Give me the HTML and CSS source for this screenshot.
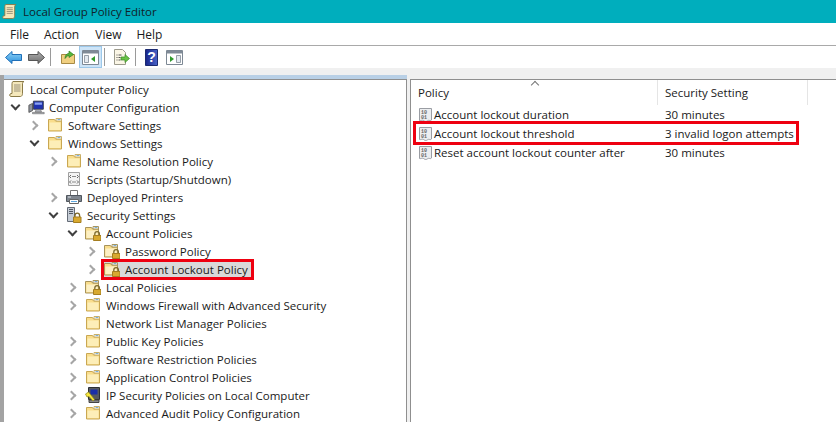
FILE: index.html
```html
<!DOCTYPE html>
<html lang="en">
<head>
<meta charset="utf-8">
<title>Local Group Policy Editor</title>
<link rel="stylesheet" href="styles.css">
</head>
<body>
<svg class="sprite" aria-hidden="true">
  <defs>
    <linearGradient id="blueArrow" x1="0" y1="0" x2="0" y2="1">
      <stop offset="0" stop-color="#8fd3f7"/><stop offset="1" stop-color="#2b8fdc"/>
    </linearGradient>
    <linearGradient id="greyArrow" x1="0" y1="0" x2="0" y2="1">
      <stop offset="0" stop-color="#b0b0b0"/><stop offset="1" stop-color="#6d6d6d"/>
    </linearGradient>
    <linearGradient id="helpBook" x1="0" y1="0" x2="1" y2="0">
      <stop offset="0" stop-color="#17248a"/><stop offset="1" stop-color="#4a64c8"/>
    </linearGradient>
    <symbol id="scroll" viewBox="0 0 16 16">
      <path d="M4 .5h11c-1 .5-1.500 1.200-1.500 2.200v10c0 1.300-.8 2.800-2 2.800H1.800C.3 15.300.3 12.800 2 12.500h1V2.500C3 1.500 3.300.8 4 .5z" fill="#f5e8bb" stroke="#8a7a48"/>
      <path d="M5 4h6.500M5 6h6.500M5 8h6.500M5 10h6.500" stroke="#9a917a"/>
    </symbol>
    <symbol id="folder" viewBox="0 0 16 16">
      <path d="M1.500 2.500h6l1 1.500h6v10h-13z" fill="#f9dd8c" stroke="#c9a752"/>
      <path d="M2.500 5.500h11v7.500h-11z" fill="#fdeeb8"/>
      <path d="M9 1.500h5.500v2.500H9z" fill="#fff" stroke="#c9b06a"/>
      <path d="M10.500 2.500h3" stroke="#7fb0d8"/>
    </symbol>
    <symbol id="lockfolder" viewBox="0 0 16 16">
      <path d="M.5 2.500h6l1 1.500h6v10H.5z" fill="#f9dd8c" stroke="#a8935a"/>
      <path d="M1.500 5.500h11v7.500h-11z" fill="#fdf0c4"/>
      <path d="M8 1.500h5.500v2.500H8z" fill="#fff" stroke="#a8965f"/>
      <path d="M9.500 2.500h3" stroke="#7fb0d8"/>
      <path d="M9.800 10.500V9a2.300 2.300 0 0 1 4.600 0v1.500" fill="none" stroke="#7d6a2c" stroke-width="1.300"/>
      <path d="M8.500 10.500h7.500v5H8.500z" fill="#d8a92f" stroke="#a57e20"/>
    </symbol>
    <symbol id="computer" viewBox="0 0 20 16">
      <path d="M1 6l4-2v8l-4 2z" fill="#8e939e" stroke="#555"/>
      <path d="M6 1.500h11v9H6z" fill="#1f32b0" stroke="#333a48"/>
      <path d="M7.500 3h8v2.500h-8z" fill="#8aa2f2"/>
      <path d="M9 11h5l1 2.500H8zM5 14h13v1.500H5z" fill="#b8bcc4" stroke="#666" stroke-width=".7"/>
    </symbol>
    <symbol id="script" viewBox="0 0 16 16">
      <path d="M2.500 1.500h11v13h-11z" fill="#f3f3f3" stroke="#a0a0a0"/>
      <path d="M5 4l-1.500 1.500L5 7M11 4l1.500 1.500L11 7M5 9.500L3.500 11 5 12.500M11 9.500l1.500 1.500-1.500 1.500" fill="none" stroke="#666"/>
      <path d="M6 5.500h4M6 11h4" stroke="#888"/>
    </symbol>
    <symbol id="printer" viewBox="0 0 16 16">
      <path d="M4.500 1.500h7v5h-7z" fill="#fff" stroke="#777"/>
      <path d="M.5 6.500h15v6H.5z" fill="#7f868f" stroke="#50565e"/>
      <path d="M3.500 10.500h9v4h-9z" fill="#fff" stroke="#666"/>
      <path d="M2 8h3" stroke="#dfe3e8"/>
      <path d="M5 12.500h6" stroke="#5ea8e0"/>
    </symbol>
    <symbol id="server" viewBox="0 0 16 16">
      <path d="M1.500.5h7v14h-7z" fill="#c6cdd6" stroke="#646b76"/>
      <path d="M3 2.500h4M3 4.500h4M3 6.500h4" stroke="#505864"/>
      <path d="M9 10V8.500a2.300 2.300 0 0 1 4.600 0V10" fill="none" stroke="#7d6a2c" stroke-width="1.300"/>
      <path d="M7.500 10h7.500v5.500H7.500z" fill="#d8a92f" stroke="#a57e20"/>
    </symbol>
    <symbol id="ipsec" viewBox="0 0 16 16">
      <path d="M3.500.5h11v12h-11z" fill="#55595f" stroke="#2c2f33"/>
      <path d="M5.500 2.500h7v5h-7z" fill="#1a2fa8"/>
      <path d="M4 13h10v2.500H4z" fill="#888" stroke="#444"/>
      <path d="M.5 7l3-2 2 2.500 4 5-1.500 1.500-4-4.500-2 .5z" fill="#f6e63c" stroke="#8c8420" stroke-width=".7"/>
    </symbol>
    <symbol id="policy" viewBox="0 0 16 16">
      <path d="M1.500 1.500h12v11.500c-1 1.500-2.500-.5-4 .8s-3 .5-4-.3-3 .5-4 0z" fill="#eceef0" stroke="#9a9da3"/>
      <text x="3" y="6.500" class="bits">10</text>
      <text x="3" y="11.500" class="bits">01</text>
    </symbol>
    <symbol id="back" viewBox="0 0 17 13">
      <path d="M.5 6.500L7 .5v3h9.500v6H7v3z" fill="url(#blueArrow)" stroke="#1f6fb8"/>
    </symbol>
    <symbol id="forward" viewBox="0 0 17 13">
      <path d="M16.500 6.500L10 .5v3H.5v6H10v3z" fill="url(#greyArrow)" stroke="#555"/>
    </symbol>
    <symbol id="up" viewBox="0 0 16 16">
      <path d="M1.500 5.500h13v9h-13z" fill="#f0cf80" stroke="#a88a44"/>
      <path d="M5 9.500C5 6 7 4.500 9 4.500V2l4.500 3.500L9 8.500V6.500C7.500 6.500 6.500 7.500 5 9.500z" fill="#55b83a" stroke="#2e7d22" stroke-width=".7"/>
    </symbol>
    <symbol id="panel-left" viewBox="0 0 17 15">
      <path d="M.5.5h16v14H.5z" fill="#fff" stroke="#7d8894"/>
      <path d="M1 1h15v2.500H1z" fill="#7f8a96"/>
      <path d="M2.500 5.500h4v7h-4z" fill="#e4e9ef" stroke="#7f8a96" stroke-width=".8"/>
      <path d="M13 6v6L9 9z" fill="#2f9a2c"/>
    </symbol>
    <symbol id="panel-right" viewBox="0 0 17 15">
      <path d="M.5.5h16v14H.5z" fill="#fff" stroke="#7d8894"/>
      <path d="M1 1h15v2.500H1z" fill="#7f8a96"/>
      <path d="M10.500 5.500h4v7h-4z" fill="#e4e9ef" stroke="#7f8a96" stroke-width=".8"/>
      <path d="M4 6v6l4-3z" fill="#2f9a2c"/>
    </symbol>
    <symbol id="export" viewBox="0 0 17 16">
      <path d="M1.500.5h8l3 3v12h-11z" fill="#fbf6e6" stroke="#9c9a8c"/>
      <path d="M3.500 6h1M3.500 8.500h1M3.500 11h1M5.500 6h3M5.500 8.500h2M5.500 11h2" stroke="#555"/>
      <path d="M8 8h4V5.500L16.500 9.500 12 13.500V11H8z" fill="#69c245" stroke="#3a8a26" stroke-width=".7"/>
    </symbol>
    <symbol id="help" viewBox="0 0 13 17">
      <path d="M.5.500h12v16H.5z" fill="url(#helpBook)" stroke="#1c2a70"/>
      <text x="6.500" y="13" class="qmark">?</text>
    </symbol>
  </defs>
</svg>

<header class="titlebar">
  <svg class="ico-title"><use href="#scroll"/></svg>
  <span class="title">Local Group Policy Editor</span>
</header>

<nav class="menubar">
  <span class="menu m-file">File</span>
  <span class="menu m-action">Action</span>
  <span class="menu m-view">View</span>
  <span class="menu">Help</span>
</nav>

<div class="toolbar">
  <span class="btn"><svg class="ico-arrow"><use href="#back"/></svg></span>
  <span class="btn"><svg class="ico-arrow"><use href="#forward"/></svg></span>
  <span class="sep"></span>
  <span class="btn"><svg class="ico-16"><use href="#up"/></svg></span>
  <span class="btn pressed"><svg class="ico-panel"><use href="#panel-left"/></svg></span>
  <span class="sep"></span>
  <span class="btn"><svg class="ico-export"><use href="#export"/></svg></span>
  <span class="sep sep-tight"></span>
  <span class="btn"><svg class="ico-help"><use href="#help"/></svg></span>
  <span class="btn"><svg class="ico-panel"><use href="#panel-right"/></svg></span>
</div>

<main class="workspace">
  <section class="tree">
    <div class="row l0"><svg class="ico"><use href="#scroll"/></svg><span class="label">Local Computer Policy</span></div>
    <div class="row l1"><span class="chev open"></span><svg class="ico ico-wide"><use href="#computer"/></svg><span class="label">Computer Configuration</span></div>
    <div class="row l2"><span class="chev"></span><svg class="ico"><use href="#folder"/></svg><span class="label">Software Settings</span></div>
    <div class="row l2"><span class="chev open"></span><svg class="ico"><use href="#folder"/></svg><span class="label">Windows Settings</span></div>
    <div class="row l3"><span class="chev"></span><svg class="ico"><use href="#folder"/></svg><span class="label">Name Resolution Policy</span></div>
    <div class="row l3"><span class="chev none"></span><svg class="ico"><use href="#script"/></svg><span class="label">Scripts (Startup/Shutdown)</span></div>
    <div class="row l3"><span class="chev"></span><svg class="ico"><use href="#printer"/></svg><span class="label">Deployed Printers</span></div>
    <div class="row l3"><span class="chev open"></span><svg class="ico"><use href="#server"/></svg><span class="label">Security Settings</span></div>
    <div class="row l4"><span class="chev open"></span><svg class="ico"><use href="#lockfolder"/></svg><span class="label">Account Policies</span></div>
    <div class="row l5"><span class="chev"></span><svg class="ico"><use href="#lockfolder"/></svg><span class="label">Password Policy</span></div>
    <div class="row l5"><span class="chev"></span><span class="picked"><svg class="ico"><use href="#lockfolder"/></svg><span class="label">Account Lockout Policy</span></span></div>
    <div class="row l4"><span class="chev"></span><svg class="ico"><use href="#lockfolder"/></svg><span class="label">Local Policies</span></div>
    <div class="row l4"><span class="chev"></span><svg class="ico"><use href="#folder"/></svg><span class="label">Windows Firewall with Advanced Security</span></div>
    <div class="row l4"><span class="chev none"></span><svg class="ico"><use href="#folder"/></svg><span class="label">Network List Manager Policies</span></div>
    <div class="row l4"><span class="chev"></span><svg class="ico"><use href="#folder"/></svg><span class="label">Public Key Policies</span></div>
    <div class="row l4"><span class="chev"></span><svg class="ico"><use href="#folder"/></svg><span class="label">Software Restriction Policies</span></div>
    <div class="row l4"><span class="chev"></span><svg class="ico"><use href="#folder"/></svg><span class="label">Application Control Policies</span></div>
    <div class="row l4"><span class="chev"></span><svg class="ico"><use href="#ipsec"/></svg><span class="label">IP Security Policies on Local Computer</span></div>
    <div class="row l4"><span class="chev"></span><svg class="ico"><use href="#folder"/></svg><span class="label">Advanced Audit Policy Configuration</span></div>
  </section>

  <section class="list">
    <div class="list-head">
      <span class="col-a head-cell">Policy<span class="sort"></span></span>
      <span class="col-b head-cell">Security Setting</span>
    </div>
    <div class="list-row">
      <span class="col-a cell"><svg class="ico"><use href="#policy"/></svg>Account lockout duration</span>
      <span class="col-b">30 minutes</span>
    </div>
    <div class="list-row marked">
      <span class="col-a cell"><svg class="ico"><use href="#policy"/></svg>Account lockout threshold</span>
      <span class="col-b">3 invalid logon attempts</span>
    </div>
    <div class="list-row">
      <span class="col-a cell"><svg class="ico"><use href="#policy"/></svg>Reset account lockout counter after</span>
      <span class="col-b">30 minutes</span>
    </div>
  </section>
</main>
</body>
</html>
```

FILE: styles.css
```css
*, *::before, *::after { box-sizing: border-box; }

html, body {
  margin: 0;
  height: 100%;
  overflow: hidden;
}

body {
  background: #f0f0f0;
  color: #1a1a1a;
  font-family: "Open Sans", "Noto Sans", sans-serif;
  font-size: 11.500px;
  display: flex;
  flex-direction: column;
}

.sprite { width: 0; height: 0; position: absolute; }
.bits { font: bold 5px "Liberation Mono", monospace; fill: #666; }
.qmark { font: bold 14px "Liberation Sans", sans-serif; fill: #fff; text-anchor: middle; }

.titlebar {
  height: 23px;
  background: #00aebd;
  display: flex;
  align-items: center;
  padding-left: 2px;
  flex: none;
}
.ico-title { width: 15px; height: 15px; margin-right: 6px; }
.title { color: #10222a; }

.menubar {
  height: 23px;
  background: #fff;
  border-bottom: 1px solid #a9a9a9;
  display: flex;
  align-items: center;
  padding-left: 10px;
  font-size: 12px;
  flex: none;
}
.menu { display: block; }
.m-file { margin-right: 15px; }
.m-action { margin-right: 16px; }
.m-view { margin-right: 15px; }

.toolbar {
  height: 22px;
  background: #fff;
  display: flex;
  align-items: stretch;
  padding-left: 2px;
  flex: none;
}
.btn {
  width: 23px;
  display: flex;
  align-items: center;
  justify-content: center;
  flex: none;
}
.pressed { background: #cde4f7; border: 1px solid #9cc8ea; }
.sep {
  width: 1px;
  margin: 2px 5px 2px 2px;
  background: #9a9a9a;
  flex: none;
}
.sep-tight { margin-right: 4px; }
.ico-arrow { width: 17px; height: 13px; }
.ico-16 { width: 16px; height: 16px; }
.ico-panel { width: 17px; height: 15px; }
.ico-export { width: 17px; height: 16px; }
.ico-help { width: 13px; height: 17px; }

.workspace {
  flex: 1;
  min-height: 0;
  display: flex;
  padding: 11px 0 0 4px;
  background: linear-gradient(#a3a3a3, #a3a3a3) 0 7px / 4px 100% no-repeat #f0f0f0;
}

.tree {
  width: 403px;
  background: #fff;
  border-top: 1px solid #8f8f8f;
  border-right: 1px solid #8f8f8f;
  box-shadow: 0 -4px 0 #b9d0e6;
  overflow: hidden;
  flex: none;
}

.row {
  height: 18px;
  display: flex;
  align-items: center;
  white-space: nowrap;
}
.l0, .l1 { padding-left: 5px; }
.l2 { padding-left: 24px; }
.l3 { padding-left: 43px; }
.l4 { padding-left: 62px; }
.l5 { padding-left: 81px; }

.chev {
  width: 19px;
  height: 18px;
  flex: none;
  position: relative;
}
.chev::before {
  content: "";
  position: absolute;
  left: 2px;
  top: 6px;
  width: 7px;
  height: 7px;
  border-top: 2px solid #a6a6a6;
  border-right: 2px solid #a6a6a6;
  transform: rotate(45deg);
}
.chev.open::before {
  left: 3px;
  top: 4px;
  border-color: #404040;
  transform: rotate(135deg);
}
.chev.none::before { display: none; }

.ico {
  width: 16px;
  height: 16px;
  margin-right: 5px;
  flex: none;
}
.ico-wide { width: 18px; margin-right: 3px; }

.picked {
  position: relative;
  display: flex;
  align-items: center;
  height: 18px;
  background: #d9d9d9;
  padding-right: 4px;
}
.picked::after {
  content: "";
  position: absolute;
  left: -3px;
  right: -2px;
  top: -1px;
  bottom: -2px;
  border: 3px solid #ee0010;
}

.list {
  flex: 1;
  margin-left: 3px;
  background: #fff;
  border-top: 1px solid #8f8f8f;
  border-left: 1px solid #8f8f8f;
  overflow: hidden;
}
.list-head {
  height: 25px;
  display: flex;
  align-items: center;
  position: relative;
}
.head-cell { position: relative; height: 100%; display: flex; align-items: center; }
.col-a { width: 247px; padding-left: 7px; flex: none; }
.col-b { width: 150px; padding-left: 7px; flex: none; }
.head-cell.col-a { border-right: 1px solid #e5e5e5; }
.head-cell.col-b { border-right: 1px solid #e5e5e5; }
.sort {
  position: absolute;
  left: 121px;
  top: 2px;
  width: 6px;
  height: 6px;
  border-top: 1px solid #777;
  border-left: 1px solid #777;
  transform: rotate(45deg);
}
.list-row {
  height: 19px;
  display: flex;
  align-items: center;
  white-space: nowrap;
  position: relative;
}
.cell { display: flex; align-items: center; }
.cell .ico { margin-right: 0; }
.marked::after {
  content: "";
  position: absolute;
  left: 2px;
  width: 386px;
  top: -3px;
  height: 24px;
  border: 3px solid #ee0010;
}
```
